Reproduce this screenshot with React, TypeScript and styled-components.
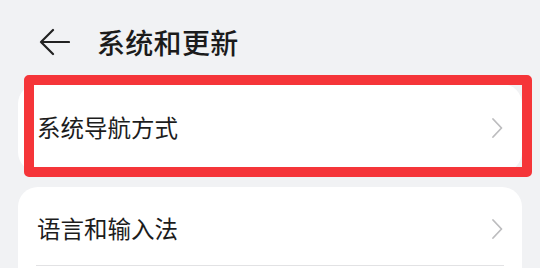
import styled, { createGlobalStyle } from "styled-components";

const GlobalStyle = createGlobalStyle`
  html, body {
    margin: 0;
    padding: 0;
    background: #f1f2f4;
  }
  body {
    font-family: "Noto Sans CJK SC", "Noto Sans", sans-serif;
  }
`;

const Page = styled.div`
  width: 540px;
  height: 268px;
  padding: 0 18px;
  box-sizing: border-box;
  overflow: hidden;
  background: #f1f2f4;
`;

const Header = styled.div`
  display: flex;
  align-items: center;
  height: 84px;
  padding-left: 21px;
`;

const BackButton = styled.button`
  display: flex;
  align-items: center;
  padding: 0;
  border: none;
  background: none;
  cursor: pointer;
`;

const Title = styled.h1`
  margin: 0 0 0 27px;
  font-size: 28px;
  font-weight: 500;
  color: #1b1b1b;
  letter-spacing: 0.3px;
`;

const CardWrap = styled.div`
  position: relative;
`;

const Card = styled.div<{ $pt: number; $pb: number }>`
  background: #ffffff;
  border-radius: 20px;
  padding: ${(p) => p.$pt}px 18px ${(p) => p.$pb}px;
`;

const Row = styled.div<{ $h: number; $divider?: boolean }>`
  display: flex;
  align-items: center;
  justify-content: space-between;
  height: ${(p) => p.$h}px;
  border-bottom: ${(p) => (p.$divider ? "1px solid #e2e2e4" : "none")};
  box-sizing: border-box;
`;

const Label = styled.span`
  font-size: 23.5px;
  color: #1c1c1c;
  padding-left: 1px;
  margin-top: -2px;
`;

/* red annotation frame on top of the first card */
const Highlight = styled.div`
  position: absolute;
  top: -9px;
  left: 6px;
  right: -10px;
  bottom: -5px;
  border: 10px solid #f53539;
  border-radius: 5px;
  pointer-events: none;
`;

const Gap = styled.div`
  height: 15px;
`;

function Chevron() {
  return (
    <svg width="14" height="22" viewBox="0 0 14 22" fill="none">
      <path d="M3 2 L11.5 11 L3 20" stroke="#bdbdbf" strokeWidth="1.8" strokeLinecap="round" strokeLinejoin="round" />
    </svg>
  );
}

export default function App() {
  return (
    <Page>
      <GlobalStyle />
      <Header>
        <BackButton>
          <svg width="31" height="28" viewBox="0 0 31 28" fill="none">
            <path d="M2 14 H30 M14 2 L2 14 L14 26" stroke="#222" strokeWidth="2.2" strokeLinecap="round" strokeLinejoin="round" />
          </svg>
        </BackButton>
        <Title>系统和更新</Title>
      </Header>
      <CardWrap>
        <Card $pt={6} $pb={6}>
          <Row $h={76}>
            <Label>系统导航方式</Label>
            <Chevron />
          </Row>
        </Card>
        <Highlight />
      </CardWrap>
      <Gap />
      <Card $pt={6} $pb={20}>
        <Row $h={73} $divider>
          <Label>语言和输入法</Label>
          <Chevron />
        </Row>
      </Card>
    </Page>
  );
}
